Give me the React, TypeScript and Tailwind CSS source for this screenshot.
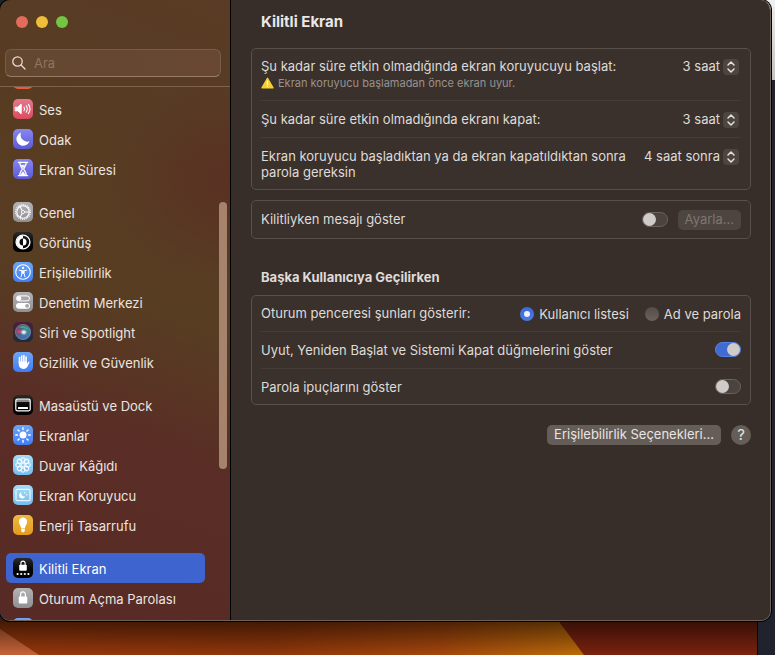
import React, { useState } from 'react';

const svgProps = { viewBox: '0 0 20 20', className: 'block h-5 w-5', 'aria-hidden': true };

const SoundIcon = () => (
    <svg {...svgProps} fill="none" stroke="#fff" strokeLinecap="round">
        <path d="M2.6 8.2h2.2l3.4-3v9.600l-3.400-3H2.600z" fill="#fff" stroke="#fff" strokeWidth="1" strokeLinejoin="round" />
        <path d="M11 8.2q1.2 1.8 0 3.6M13.2 6.8q2.2 3.2 0 6.4M15.4 5.4q3.2 4.6 0 9.2" strokeWidth="1.1" />
    </svg>
);

const MoonIcon = () => (
    <svg {...svgProps}>
        <path d="M8.1 3.6a6.7 6.7 0 1 0 8.4 8.6A6.6 6.6 0 0 1 8.1 3.6z" fill="#fff" />
    </svg>
);

const HourglassIcon = () => (
    <svg {...svgProps} fill="none" stroke="#fff" strokeWidth="1.3" strokeLinejoin="round">
        <path d="M5.4 3.4h9.2M5.4 16.6h9.2" strokeLinecap="round" />
        <path d="M6.8 3.8c0 3.6 2.4 4.4 2.4 6.2s-2.4 2.6-2.4 6.2M13.2 3.8c0 3.6-2.4 4.4-2.4 6.2s2.4 2.6 2.4 6.2" />
        <path d="M8 6.2h4l-2 2.6zM7.6 16l2.4-3.4 2.4 3.4z" fill="#fff" strokeWidth="0.5" />
    </svg>
);

const GearIcon = () => (
    <svg {...svgProps} fill="none" stroke="#fff">
        <circle cx="10" cy="10" r="7.3" strokeWidth="1.3" strokeDasharray="1 0.91" />
        <circle cx="10" cy="10" r="6.2" strokeWidth="1.1" />
        <circle cx="10" cy="10" r="1.6" strokeWidth="0.9" />
        <path d="M11.6 10h4.6M9.2 8.6 6.9 4.6M9.2 11.4l-2.3 4" strokeWidth="1.1" />
    </svg>
);

const AppearanceIcon = () => (
    <svg {...svgProps}>
        <circle cx="10" cy="10" r="6.9" fill="none" stroke="#fff" strokeWidth="1.4" />
        <path d="M10 3.5a6.5 6.5 0 0 0 0 13z" fill="#fff" />
        <path d="M10 6.5a3.5 3.5 0 0 0 0 7z" fill="#0b0b0b" />
        <path d="M10 6.5a3.5 3.5 0 0 1 0 7z" fill="#fff" />
    </svg>
);

const AccessibilityIcon = () => (
    <svg {...svgProps} fill="none" stroke="#fff" strokeLinecap="round" strokeLinejoin="round">
        <circle cx="10" cy="10" r="7.3" strokeWidth="1.1" />
        <circle cx="10" cy="5.9" r="1.2" fill="#fff" stroke="none" />
        <path d="M6.3 8.2 9 8.7v2.6l-1 3.6M13.7 8.2 11 8.7v2.6l1 3.6" strokeWidth="1" />
        <path d="M9 8.5h2v3H9z" fill="#fff" strokeWidth="0.5" />
    </svg>
);

const ControlCenterIcon = () => (
    <svg {...svgProps}>
        <rect x="3.5" y="3.9" width="13" height="5" rx="2.5" fill="none" stroke="#fff" strokeWidth="1" />
        <circle cx="6" cy="6.4" r="2.3" fill="#fff" />
        <rect x="3" y="10.9" width="14" height="5.8" rx="2.9" fill="#fff" />
        <circle cx="14.1" cy="13.8" r="1.9" fill="#a3a3a5" />
    </svg>
);

const SiriIcon = () => (
    <svg {...svgProps}>
        <defs>
            <radialGradient id="siri-core">
                <stop offset="0" stopColor="#fff" />
                <stop offset="0.4" stopColor="#dcebf5" stopOpacity="0.8" />
                <stop offset="1" stopColor="#4b8fd0" stopOpacity="0" />
            </radialGradient>
            <linearGradient id="siri-orb" x1="0" y1="0" x2="1" y2="0.6">
                <stop offset="0" stopColor="#8c3f68" />
                <stop offset="0.5" stopColor="#4b6a78" />
                <stop offset="1" stopColor="#3a86b0" />
            </linearGradient>
        </defs>
        <circle cx="10" cy="10" r="7.8" fill="url(#siri-orb)" />
        <path d="M6 5.500C9 2.500 15 4 16.500 9 13 6.500 9.500 6 6 5.500z" fill="#3fa886" />
        <path d="M4 11c3 3.600 8 5 11.500 2.500-2.500 4.500-10 3.500-11.500-2.500z" fill="#4f63cf" />
        <path d="M3.500 10.500C4.500 7.500 7.500 7 10.500 10c-2.500 1.500-5 1.800-7 .500z" fill="#c4457c" />
        <circle cx="10" cy="10" r="7.6" fill="none" stroke="#a3aab5" strokeOpacity="0.5" strokeWidth="0.8" />
        <ellipse cx="10.8" cy="10.2" rx="4.2" ry="3.6" fill="url(#siri-core)" />
    </svg>
);

const HandIcon = () => (
    <svg {...svgProps} fill="none" stroke="#fff" strokeWidth="1.6" strokeLinecap="round">
        <path d="M6.5 5.6v5M8.7 4v6M10.9 3.6V10M13.1 5v6" />
        <path d="M5.7 9.5h8.2v2.2l1.6-2c.5-.5 1.2-.1 1 .6l-2 4.300c-.800 1.600-2 2.300-4 2.300-3 0-4.800-2-4.800-4.800z" fill="#fff" stroke="none" />
    </svg>
);

const DockIcon = () => (
    <svg {...svgProps}>
        <rect x="2.8" y="4.2" width="14.4" height="11.6" rx="1.5" fill="none" stroke="#fff" strokeWidth="1.2" />
        <path d="M3 6h14" stroke="#fff" strokeWidth="1" />
        <rect x="5" y="12" width="10" height="2" rx="0.5" fill="#fff" />
    </svg>
);

const rays = [0, 45, 90, 135, 180, 225, 270, 315];

const SunIcon = () => (
    <svg {...svgProps}>
        <circle cx="10" cy="10" r="3.5" fill="#fff" />
        {rays.map(angle => (
            <path key={angle} d="M10 2.8v1.7" stroke="#fff" strokeWidth="1.4" strokeLinecap="round" transform={`rotate(${angle} 10 10)`} />
        ))}
    </svg>
);

const FlowerIcon = () => (
    <svg {...svgProps} fill="none" stroke="#fff" strokeWidth="1">
        {rays.map(angle => (
            <circle key={angle} cx="10" cy="5" r="2.2" transform={`rotate(${angle} 10 10)`} />
        ))}
        <circle cx="10" cy="10" r="2" />
    </svg>
);

const ScreenSaverIcon = () => (
    <svg {...svgProps}>
        <rect x="3" y="4.3" width="14" height="11.4" rx="1" fill="none" stroke="#fff" strokeWidth="1" />
        <path d="M8.4 7.2a3.2 3.2 0 1 0 3.9 4.1 3.1 3.1 0 0 1-3.9-4.1z" fill="#fff" />
        <circle cx="11.8" cy="7.7" r="0.7" fill="#fff" />
        <circle cx="13.8" cy="9.7" r="0.7" fill="#fff" />
    </svg>
);

const BulbIcon = () => (
    <svg {...svgProps} fill="#fff">
        <path d="M10 2.6a4.1 4.1 0 0 0-4.100 4.200c0 2.500 2 3.700 2.200 6.600h3.800c.2-2.900 2.200-4.100 2.200-6.600A4.100 4.100 0 0 0 10 2.600z" />
        <path d="M8.2 14h3.6v1.4c0 1-.7 1.8-1.8 1.8s-1.8-.8-1.8-1.8z" />
    </svg>
);

const LockDotsIcon = () => (
    <svg {...svgProps} fill="#fff">
        <rect x="6.2" y="6.7" width="7.6" height="6" rx="0.9" />
        <path d="M7.9 7V5.2a2.1 2.1 0 0 1 4.2 0V7" fill="none" stroke="#fff" strokeWidth="1.1" />
        <circle cx="4.6" cy="16" r="1.1" />
        <circle cx="8.2" cy="16" r="1.1" />
        <circle cx="11.8" cy="16" r="1.1" />
        <circle cx="15.4" cy="16" r="1.1" />
    </svg>
);

const LockIcon = () => (
    <svg {...svgProps} fill="#fff">
        <rect x="5.7" y="8.6" width="8.6" height="7" rx="1" />
        <path d="M7.6 9V6.3a2.4 2.4 0 0 1 4.8 0V9" fill="none" stroke="#fff" strokeWidth="1.2" />
    </svg>
);

type Item = { label: string; tile: string; icon?: React.ReactNode };

const GROUPS: Item[][] = [
    [
        { label: '', tile: 'from-[#f0705a] to-[#e9593f]' },
        { label: 'Ses', tile: 'from-[#e0798f] to-[#dd4a60]', icon: <SoundIcon /> },
        { label: 'Odak', tile: 'from-[#8886ee] to-[#5c5ad8]', icon: <MoonIcon /> },
        { label: 'Ekran Süresi', tile: 'from-[#8886ee] to-[#5c5ad8]', icon: <HourglassIcon /> },
    ],
    [
        { label: 'Genel', tile: 'from-[#b3b3b5] to-[#909092]', icon: <GearIcon /> },
        { label: 'Görünüş', tile: 'from-[#2b2b2b] to-[#000000]', icon: <AppearanceIcon /> },
        { label: 'Erişilebilirlik', tile: 'from-[#6ea5f8] to-[#3f7df5]', icon: <AccessibilityIcon /> },
        { label: 'Denetim Merkezi', tile: 'from-[#b3b3b5] to-[#909092]', icon: <ControlCenterIcon /> },
        { label: 'Siri ve Spotlight', tile: 'from-[#4a1f3c] to-[#1c2b3a]', icon: <SiriIcon /> },
        { label: 'Gizlilik ve Güvenlik', tile: 'from-[#6ea5f8] to-[#3f7df5]', icon: <HandIcon /> },
    ],
    [
        { label: 'Masaüstü ve Dock', tile: 'from-[#2b2b2b] to-[#000000]', icon: <DockIcon /> },
        { label: 'Ekranlar', tile: 'from-[#6ea5f8] to-[#3f7df5]', icon: <SunIcon /> },
        { label: 'Duvar Kâğıdı', tile: 'from-[#a4dcf8] to-[#74bdf0]', icon: <FlowerIcon /> },
        { label: 'Ekran Koruyucu', tile: 'from-[#a4dcf8] to-[#74bdf0]', icon: <ScreenSaverIcon /> },
        { label: 'Enerji Tasarrufu', tile: 'from-[#efb83f] to-[#e39c1c]', icon: <BulbIcon /> },
    ],
    [
        { label: 'Kilitli Ekran', tile: 'from-[#2b2b2b] to-[#000000]', icon: <LockDotsIcon /> },
        { label: 'Oturum Açma Parolası', tile: 'from-[#b3b3b5] to-[#909092]', icon: <LockIcon /> },
        { label: '', tile: 'from-[#6ea5f8] to-[#3f7df5]' },
    ],
];

const Sidebar: React.FC = () => {
    const [selected, setSelected] = useState('Kilitli Ekran');

    return (
        <aside className="relative flex w-[231px] shrink-0 flex-col border-r border-black bg-[radial-gradient(ellipse_120px_100px_at_100%_29%,#5a3023_0%,transparent_100%),linear-gradient(200deg,#5a3b25_0%,#573c23_20%,#573d22_48%,#5a2d26_68%,#572a25_100%)]">
            <div className="flex gap-2 px-4 pt-4">
                <button aria-label="Kapat" className="h-3 w-3 rounded-full bg-[#e16b5c]" />
                <button aria-label="Küçült" className="h-3 w-3 rounded-full bg-[#efbd3a]" />
                <button aria-label="Büyüt" className="h-3 w-3 rounded-full bg-[#73c544]" />
            </div>
            <div className="mt-[21px] mr-[9px] ml-[5px] flex h-7 items-center gap-2 rounded-md border border-[#7a5c46] border-b-[#9a7c66] bg-linear-to-r from-[#63482f] to-[#684733] px-1.5">
                <svg viewBox="0 0 14 14" className="h-3.5 w-3.5 shrink-0" fill="none" stroke="#e6ddd6" strokeWidth="1.3" strokeLinecap="round" aria-hidden>
                    <circle cx="5.5" cy="5.5" r="4.7" />
                    <path d="m9 9 4 4" />
                </svg>
                <input
                    type="text"
                    aria-label="Ara"
                    placeholder="Ara"
                    className="w-full min-w-0 bg-transparent pt-px text-[13px] text-[#ebe4df] outline-none placeholder:text-[#8f7560]"
                />
            </div>
            <nav className="mt-[9px] min-h-0 flex-1 overflow-hidden border-t border-[#7d624c]">
                <div className="-mt-[23px] flex flex-col gap-[13px] pr-[25px] pl-1.5">
                    {GROUPS.map((group, i) => (
                        <ul key={i}>
                            {group.map((item, j) => (
                                <li key={j}>
                                    <button
                                        onClick={() => setSelected(item.label)}
                                        className={`flex h-[30px] w-full items-center gap-1.5 rounded-[5px] px-[7px] text-left text-[13px] ${item.label === selected ? 'bg-[#3d64cf] text-white' : 'text-[#ebe4e0]'}`}
                                    >
                                        <span className={`h-5 w-5 shrink-0 overflow-hidden rounded-[5px] bg-linear-to-b ${item.tile}`}>{item.icon}</span>
                                        <span className="pt-0.5 leading-4 whitespace-nowrap">{item.label}</span>
                                    </button>
                                </li>
                            ))}
                        </ul>
                    ))}
                </div>
            </nav>
            <div className="absolute top-[202px] right-[3px] h-[267px] w-2 rounded-full bg-[#a5836d]" />
        </aside>
    );
};

const Card: React.FC<{ children: React.ReactNode }> = ({ children }) => (
    <div className="rounded-[5px] border border-[#59504b] bg-[#3a312c] px-[9px]">{children}</div>
);

const Row: React.FC<{ children: React.ReactNode }> = ({ children }) => (
    <div className="flex justify-between gap-4 border-t border-[#453c37] pt-2.5 pb-[9px] leading-4 first:border-t-0 first:pt-[9px]">
        {children}
    </div>
);

const PopUp: React.FC<{ id: string; options: string[] }> = ({ id, options }) => (
    <div className="relative mr-0.5 h-[17px] shrink-0">
        <select id={id} className="field-sizing-content h-4 appearance-none bg-transparent pr-[19px] leading-4 outline-none">
            {options.map(option => (
                <option key={option}>{option}</option>
            ))}
        </select>
        <svg viewBox="0 0 16 16" className="pointer-events-none absolute top-px right-0 h-4 w-4 rounded bg-[#4d4540]" fill="none" stroke="#e4e0de" strokeWidth="1.5" strokeLinecap="round" strokeLinejoin="round" aria-hidden>
            <path d="m5 6 3-3 3 3M5 10l3 3 3-3" />
        </svg>
    </div>
);

const Switch: React.FC<{ id: string; defaultChecked?: boolean }> = ({ id, defaultChecked }) => (
    <input
        id={id}
        type="checkbox"
        role="switch"
        defaultChecked={defaultChecked}
        className="flex h-[15px] w-[26px] shrink-0 appearance-none items-center rounded-full border border-[#6a625d] bg-[#4b433e] before:h-[13px] before:w-[13px] before:rounded-full before:bg-[#cfcbc9] checked:justify-end checked:border-[#5a82e0] checked:bg-[#3f6bd5]"
    />
);

const Radio: React.FC<{ label: string; defaultChecked?: boolean }> = ({ label, defaultChecked }) => (
    <label className="flex items-center gap-[5px] whitespace-nowrap">
        <input
            type="radio"
            name="login-window"
            defaultChecked={defaultChecked}
            className="flex h-3.5 w-3.5 appearance-none items-center justify-center rounded-full bg-linear-to-b from-[#544c47] to-[#6a625d] before:h-1.5 before:w-1.5 before:rounded-full checked:from-[#3c6ad6] checked:to-[#4a7ae6] checked:before:bg-[#eef1fa]"
        />
        {label}
    </label>
);

const LockScreenPane: React.FC = () => (
    <main className="min-w-0 flex-1 bg-[#382e29] pr-[19px] pl-5 text-[13px] text-[#dfdbd8]">
        <h1 className="px-2.5 pt-3 pb-4 text-[15px] leading-5 font-bold text-[#ebe7e5]">Kilitli Ekran</h1>
        <Card>
            <Row>
                <div>
                    <label htmlFor="saver">Şu kadar süre etkin olmadığında ekran koruyucuyu başlat:</label>
                    <p className="mt-px flex items-center gap-1 text-[11px] leading-4 text-[#99928e]">
                        <svg viewBox="0 0 13 12" className="h-3 w-[13px]" aria-hidden>
                            <path d="M6.5 1.3 12 10.8H1z" fill="#f5cf2f" stroke="#f5cf2f" strokeWidth="1.4" strokeLinejoin="round" />
                            <path d="M6.5 4.2v3.4M6.5 9.4v.1" stroke="#fff" strokeWidth="1.3" strokeLinecap="round" />
                        </svg>
                        Ekran koruyucu başlamadan önce ekran uyur.
                    </p>
                </div>
                <PopUp id="saver" options={['3 saat']} />
            </Row>
            <Row>
                <label htmlFor="display">Şu kadar süre etkin olmadığında ekranı kapat:</label>
                <PopUp id="display" options={['3 saat']} />
            </Row>
            <Row>
                <label htmlFor="password">Ekran koruyucu başladıktan ya da ekran kapatıldıktan sonra parola gereksin</label>
                <PopUp id="password" options={['4 saat sonra']} />
            </Row>
        </Card>

        <div className="mt-2.5">
            <Card>
                <div className="flex h-[37px] items-center gap-2.5">
                    <label htmlFor="message" className="flex-1">Kilitliyken mesajı göster</label>
                    <Switch id="message" />
                    <button disabled className="h-5 rounded-[5px] bg-[#4d4540] px-[7px] text-[#7d7571]">Ayarla...</button>
                </div>
            </Card>
        </div>

        <h2 className="mt-[30px] mb-2.5 px-2.5 leading-4 font-bold">Başka Kullanıcıya Geçilirken</h2>
        <Card>
            <Row>
                <span>Oturum penceresi şunları gösterir:</span>
                <div role="radiogroup" aria-label="Oturum penceresi şunları gösterir" className="flex h-[17px] items-center gap-4">
                    <Radio label="Kullanıcı listesi" defaultChecked />
                    <Radio label="Ad ve parola" />
                </div>
            </Row>
            <Row>
                <label htmlFor="power" className="h-[17px]">Uyut, Yeniden Başlat ve Sistemi Kapat düğmelerini göster</label>
                <Switch id="power" defaultChecked />
            </Row>
            <Row>
                <label htmlFor="hints">Parola ipuçlarını göster</label>
                <Switch id="hints" />
            </Row>
        </Card>

        <div className="mt-5 flex justify-end gap-2.5">
            <button className="h-5 rounded-[5px] bg-[#655d57] px-[7px] text-[#e8e4e1]">Erişilebilirlik Seçenekleri...</button>
            <button aria-label="Yardım" className="h-5 w-5 rounded-full bg-[#655d57] text-[15px] leading-5 text-[#e8e4e1]">?</button>
        </div>
    </main>
);

// Desktop behind the window: wallpaper along the bottom, other windows on the right
const Desktop: React.FC = () => (
    <div className="absolute inset-0 -z-10 flex bg-[#20222e]">
        <div className="flex flex-1 items-end border-r border-black">
            <svg viewBox="0 0 757 36" preserveAspectRatio="none" className="block h-9 w-full" aria-hidden>
                <defs>
                    <linearGradient id="base" x1="0" x2="1">
                        <stop offset="0" stopColor="#a03a0c" />
                        <stop offset="0.35" stopColor="#96390b" />
                        <stop offset="0.58" stopColor="#ad4a0c" />
                        <stop offset="0.78" stopColor="#c8740a" />
                    </linearGradient>
                    <linearGradient id="shade" x1="0" x2="0" y1="0" y2="1">
                        <stop offset="0" stopColor="#000" stopOpacity="0.6" />
                        <stop offset="1" stopColor="#000" stopOpacity="0.05" />
                    </linearGradient>
                </defs>
                <path d="M0 0h757v36H0z" fill="url(#base)" />
                <path d="M0 10 39 36H0z" fill="#d0683a" />
                <path d="M557 0h200v36H584z" fill="#80240f" />
                <path d="M0 0h757v36H0z" fill="url(#shade)" />
            </svg>
        </div>
        <div className="w-[17px]">
            <div className="h-20 bg-linear-to-b from-[#f0f0f0] to-[#c4c2c0]" />
        </div>
    </div>
);

export default function App() {
    return (
        <div className="relative isolate flex h-screen flex-col overflow-hidden pr-1 pb-[34px] font-['Inter',sans-serif]">
            <Desktop />
            <div className="flex min-h-0 flex-1 overflow-hidden rounded-[10px] border-r border-b border-[#6b625c] shadow-[0_0_0_1px_#000]">
                <Sidebar />
                <LockScreenPane />
            </div>
        </div>
    );
}
